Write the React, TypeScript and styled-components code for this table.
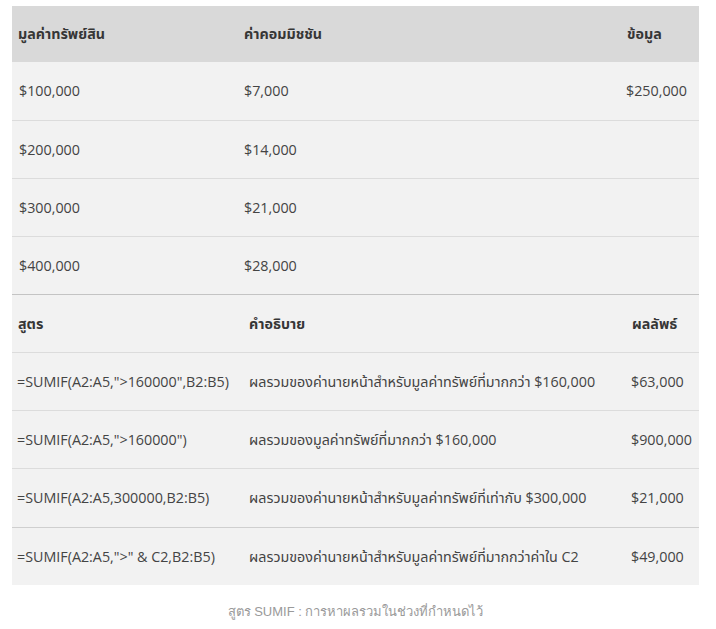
import React from "react";
import styled, { createGlobalStyle } from "styled-components";

const Global = createGlobalStyle`
  html, body { margin: 0; padding: 0; background: #ffffff; }
  body { font-family: "Open Sans", "Noto Sans", "Noto Sans Thai", sans-serif; }
`;

const Page = styled.div`
  padding: 6px 17px 0 12px;
  width: 716px;
  box-sizing: border-box;
`;

const Table = styled.div`
  display: flex;
  flex-direction: column;
  width: 687px;
`;

const Row = styled.div<{ $cols: string; $head?: boolean; $dark?: boolean; $h: number; $border?: string }>`
  display: grid;
  grid-template-columns: ${(p) => p.$cols};
  align-items: center;
  box-sizing: border-box;
  height: ${(p) => p.$h}px;
  background: ${(p) => (p.$dark ? "#d9d9d9" : "#f2f2f2")};
  border-top: ${(p) => (p.$border ? `1px solid ${p.$border}` : "none")};
  font-weight: ${(p) => (p.$head ? 700 : 400)};
  color: ${(p) => (p.$head ? "#363636" : "#444444")};
`;

const Cell = styled.div<{ $pad: number }>`
  padding-left: ${(p) => p.$pad}px;
  font-size: 14.3px;
  line-height: 20px;
  white-space: nowrap;
`;

const Caption = styled.div`
  padding-top: 17px;
  width: 687px;
  text-align: center;
  font-family: "Liberation Sans Narrow", "Liberation Sans", "Noto Sans", sans-serif;
  font-size: 13px;
  line-height: 20px;
  color: #9a9a9a;
`;

const cols1 = "225px 382px 80px";
const cols2 = "231px 382px 74px";

const top = [
  ["$100,000", "$7,000", "$250,000"],
  ["$200,000", "$14,000", ""],
  ["$300,000", "$21,000", ""],
  ["$400,000", "$28,000", ""],
];

const bottom = [
  ['=SUMIF(A2:A5,">160000",B2:B5)', "ผลรวมของค่านายหน้าสำหรับมูลค่าทรัพย์ที่มากกว่า $160,000", "$63,000"],
  ['=SUMIF(A2:A5,">160000")', "ผลรวมของมูลค่าทรัพย์ที่มากกว่า $160,000", "$900,000"],
  ["=SUMIF(A2:A5,300000,B2:B5)", "ผลรวมของค่านายหน้าสำหรับมูลค่าทรัพย์ที่เท่ากับ $300,000", "$21,000"],
  ['=SUMIF(A2:A5,">" & C2,B2:B5)', "ผลรวมของค่านายหน้าสำหรับมูลค่าทรัพย์ที่มากกว่าค่าใน C2", "$49,000"],
];

const bottomHeights = [58, 58, 59, 58];

export default function App() {
  return (
    <Page>
      <Global />
      <Table>
        <Row $cols={cols1} $head $dark $h={56}>
          <Cell $pad={6}>มูลค่าทรัพย์สิน</Cell>
          <Cell $pad={7}>ค่าคอมมิชชัน</Cell>
          <Cell $pad={8}>ข้อมูล</Cell>
        </Row>
        {top.map((r, i) => (
          <Row key={i} $cols={cols1} $h={58} $border={i === 0 ? undefined : "#dcdcdc"}>
            <Cell $pad={7}>{r[0]}</Cell>
            <Cell $pad={7}>{r[1]}</Cell>
            <Cell $pad={7}>{r[2]}</Cell>
          </Row>
        ))}
        <Row $cols={cols2} $head $h={58} $border="#c4c4c4">
          <Cell $pad={6}>สูตร</Cell>
          <Cell $pad={6}>คำอธิบาย</Cell>
          <Cell $pad={7}>ผลลัพธ์</Cell>
        </Row>
        {bottom.map((r, i) => (
          <Row key={i} $cols={cols2} $h={bottomHeights[i]} $border={i === 3 ? "#cfcfcf" : "#dcdcdc"}>
            <Cell $pad={5}>{r[0]}</Cell>
            <Cell $pad={6}>{r[1]}</Cell>
            <Cell $pad={6}>{r[2]}</Cell>
          </Row>
        ))}
      </Table>
      <Caption>สูตร SUMIF : การหาผลรวมในช่วงที่กำหนดไว้</Caption>
    </Page>
  );
}
